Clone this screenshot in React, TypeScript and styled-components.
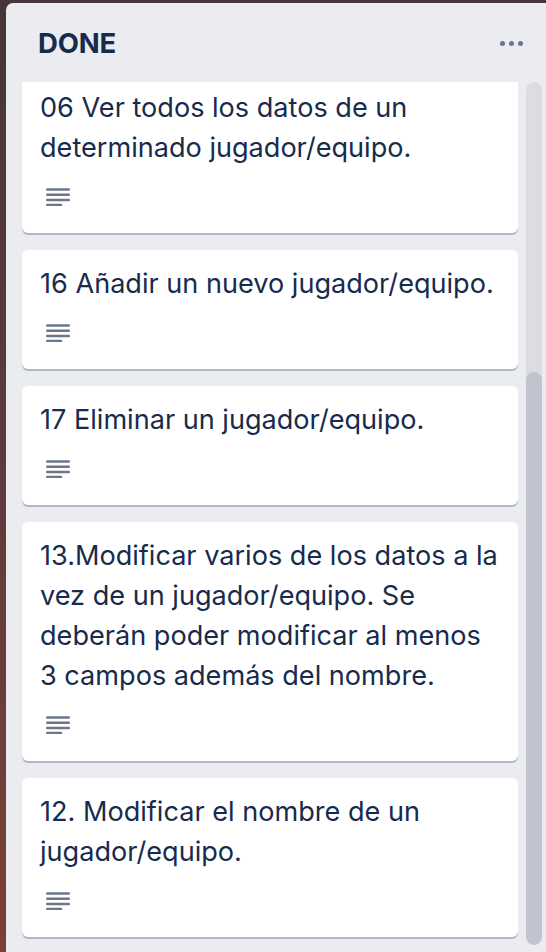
import React from "react";
import styled, { createGlobalStyle } from "styled-components";

const Global = createGlobalStyle`
  html, body { margin: 0; padding: 0; }
  body {
    width: 546px;
    height: 952px;
    overflow: hidden;
    background: linear-gradient(to bottom, #46353a 0%, #5e3b3c 50%, #7b4037 100%);
    font-family: Inter, "Noto Sans", Roboto, sans-serif;
  }
`;

const Page = styled.div`
  padding: 3px 0 0 6px;
  height: 952px;
  box-sizing: border-box;
`;

const List = styled.section`
  background: #ebecf0;
  border-radius: 7px 0 0 0;
  height: 949px;
  display: flex;
  flex-direction: column;
  overflow: hidden;
`;

const Header = styled.header`
  height: 79px;
  flex: none;
  display: flex;
  align-items: center;
  justify-content: space-between;
  padding: 0 23px 0 32px;
  box-sizing: border-box;
`;

const Title = styled.h2`
  margin: 0;
  font-size: 27.5px;
  font-weight: 700;
  color: #172b4d;
  letter-spacing: -0.2px;
`;

const Dots = styled.div`
  display: flex;
  gap: 4px;
  margin-top: 1px;
  span {
    width: 5px;
    height: 5px;
    border-radius: 50%;
    background: #6b778c;
  }
`;

const Body = styled.div`
  flex: 1;
  display: flex;
  gap: 8px;
  padding-left: 16px;
  min-height: 0;
`;

const Viewport = styled.div`
  width: 496px;
  overflow: hidden;
`;

const Cards = styled.div`
  margin-top: -8px;
  display: flex;
  flex-direction: column;
  gap: 15px;
`;

const Card = styled.article`
  background: #fff;
  border-radius: 6px;
  box-shadow: 0 2px 0 rgba(9, 30, 66, 0.25);
  padding: 14px 16px 27px 18px;
  margin-bottom: 2px;
`;

const CardText = styled.p`
  margin: 0;
  font-size: 27.1px;
  line-height: 40px;
  color: #172b4d;
  white-space: nowrap;
`;

const Badges = styled.div`
  margin-top: 20px;
  padding-left: 6px;
  height: 18px;
  display: flex;
  align-items: center;
`;

const Track = styled.div`
  width: 16px;
  height: 863px;
  border-radius: 8px;
  background: #dcdde3;
  display: flex;
  flex-direction: column;
  justify-content: flex-end;
  overflow: hidden;
`;

const Thumb = styled.div`
  height: 573px;
  border-radius: 8px;
  background: #c1c4ce;
`;

const DescIcon = () => (
  <svg width="24" height="18" viewBox="0 0 24 18">
    <g stroke="#6b778c" strokeWidth="2.4" strokeLinecap="round">
      <line x1="1.2" y1="1.5" x2="22.8" y2="1.5" />
      <line x1="1.2" y1="6.8" x2="22.8" y2="6.8" />
      <line x1="1.2" y1="12" x2="22.8" y2="12" />
      <line x1="1.2" y1="17" x2="15" y2="17" />
    </g>
  </svg>
);

const cards: string[][] = [
  ["06 Ver todos los datos de un", "determinado jugador/equipo."],
  ["16 Añadir un nuevo jugador/equipo."],
  ["17 Eliminar un jugador/equipo."],
  [
    "13.Modificar varios de los datos a la",
    "vez de un jugador/equipo. Se",
    "deberán poder modificar al menos",
    "3 campos además del nombre.",
  ],
  ["12. Modificar el nombre de un", "jugador/equipo."],
];

export default function App() {
  return (
    <>
      <Global />
      <Page>
        <List>
          <Header>
            <Title>DONE</Title>
            <Dots>
              <span />
              <span />
              <span />
            </Dots>
          </Header>
          <Body>
            <Viewport>
              <Cards>
                {cards.map((lines, i) => (
                  <Card key={i}>
                    <CardText>
                      {lines.map((l, j) => (
                        <React.Fragment key={j}>
                          {j > 0 && <br />}
                          {l}
                        </React.Fragment>
                      ))}
                    </CardText>
                    <Badges>
                      <DescIcon />
                    </Badges>
                  </Card>
                ))}
              </Cards>
            </Viewport>
            <Track>
              <Thumb />
            </Track>
          </Body>
        </List>
      </Page>
    </>
  );
}
